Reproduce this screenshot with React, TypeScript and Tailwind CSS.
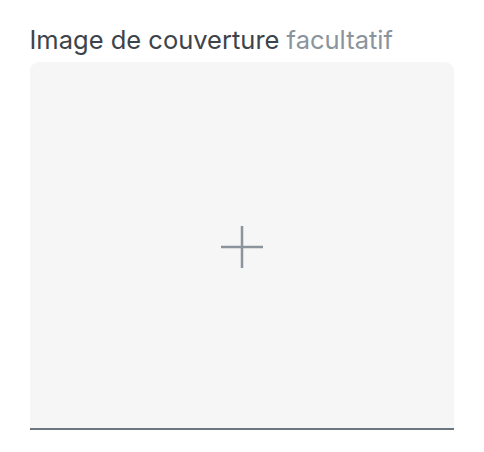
export default function App() {
  return (
    <div className="min-h-screen bg-white px-[29.5px] pt-[24px] font-['Inter',sans-serif]">
      <label className="block text-[25.5px] leading-[32px] text-[#3d434a]">
        Image de couverture <span className="text-[#8b949c]">facultatif</span>
      </label>
      <button
        type="button"
        className="mt-[6px] flex h-[368px] w-[424.5px] items-center justify-center rounded-t-[9px] border-b-2 border-[#6b7680] bg-[#f6f6f6]"
      >
        <svg width="44" height="44" viewBox="0 0 44 44" className="mb-[-3px]" aria-hidden>
          <path d="M22 1v42M1 22h42" stroke="#8b949c" strokeWidth="2.5" />
        </svg>
      </button>
    </div>
  );
}
